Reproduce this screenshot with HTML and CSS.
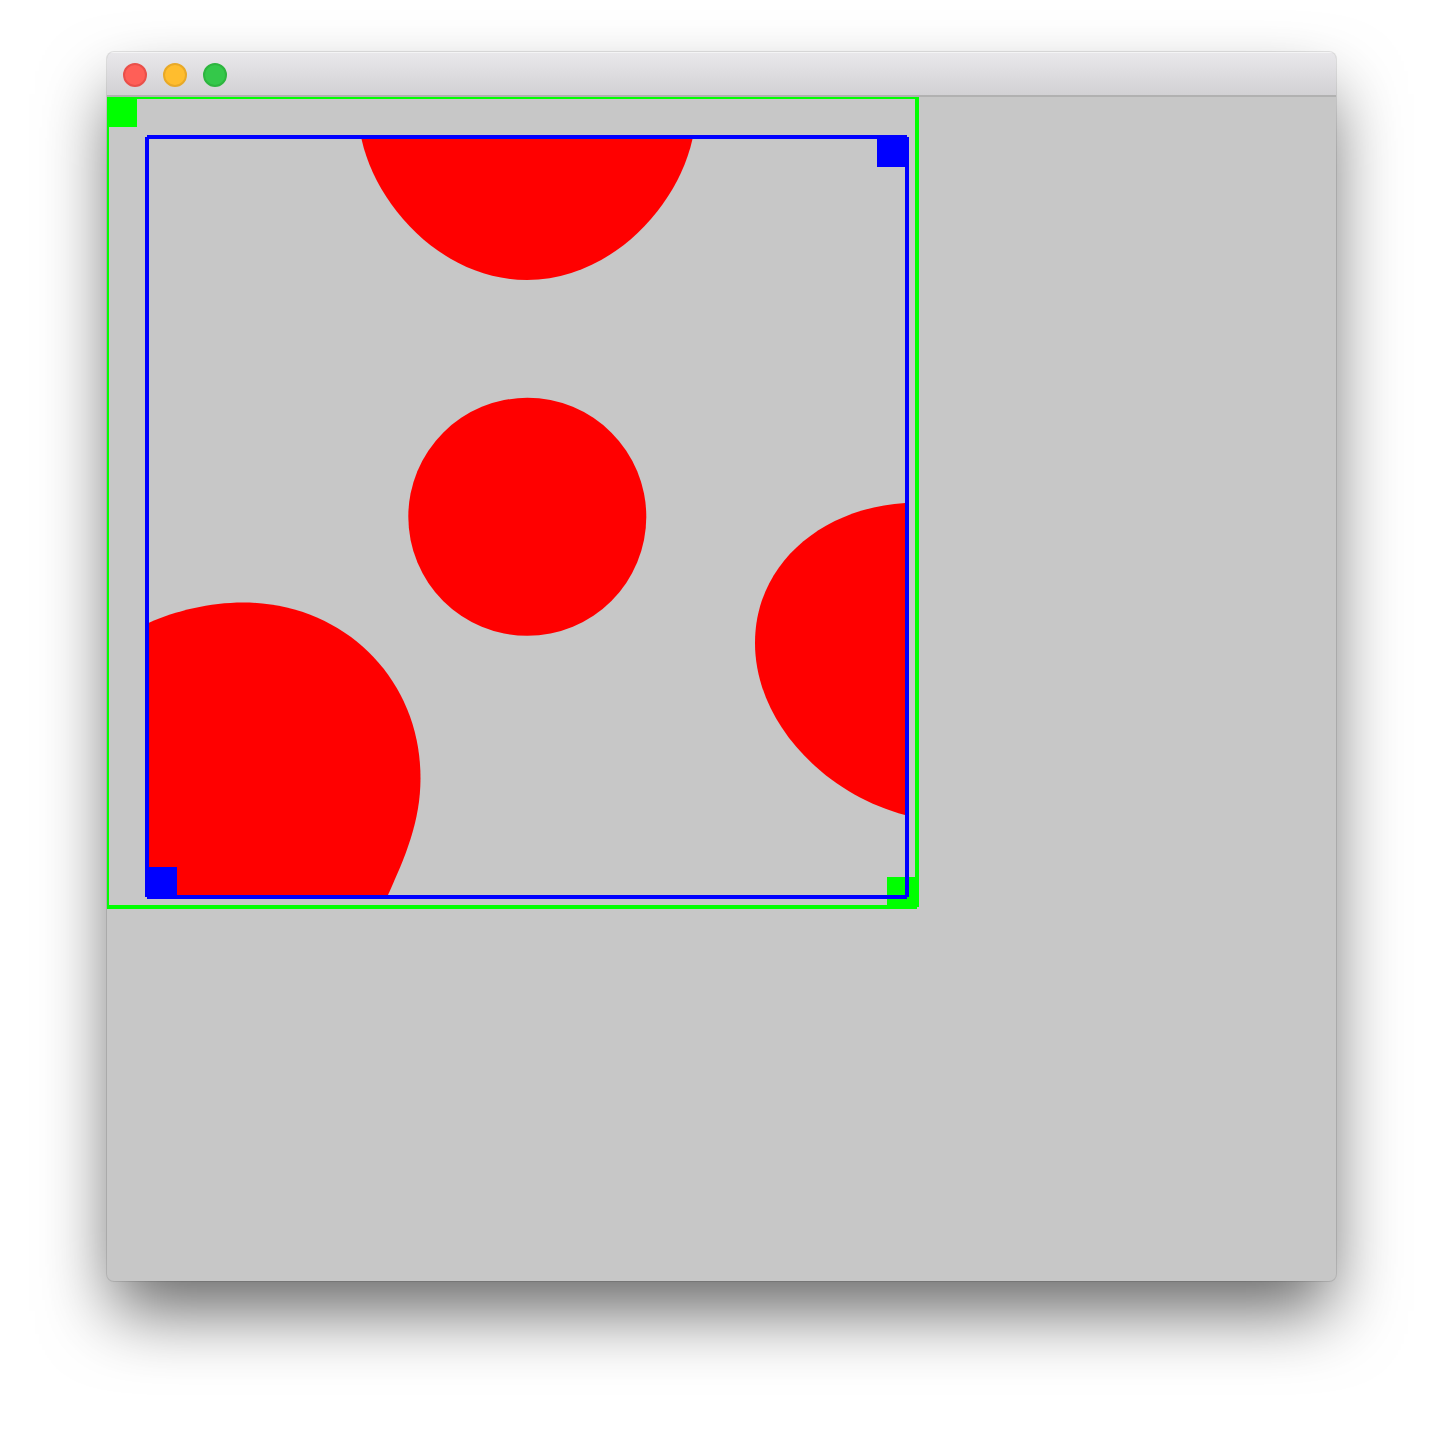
FILE: index.html
```html
<!DOCTYPE html>
<html lang="en">
<head>
    <meta charset="UTF-8">
    <title>Clip</title>
    <link rel="stylesheet" href="styles.css">
</head>
<body>
    <div class="window">
        <div class="titlebar">
            <span class="light red"></span>
            <span class="light yellow"></span>
            <span class="light green"></span>
        </div>
        <div class="content">
            <svg class="canvas" width="812" height="812" viewBox="0 0 812 812">
                <g class="green-box">
                    <rect x="0" y="0" width="30" height="30"/>
                    <rect x="780" y="780" width="30" height="30"/>
                    <path class="outline" d="M0 0H810 M810 0V810 M0 810H810 M0 0V810"/>
                </g>
                <g class="blobs">
                    <path d="M254.5 42 C270 112 338 183 420 183 C502 183 570 112 585.5 42 Z"/>
                    <circle cx="420.3" cy="419.8" r="119"/>
                    <path d="M798 406 C716 411 648 466 648 546 C648 626 718 697 798 718 Z"/>
                    <path d="M42 525.7 C68 514 103 505.5 136 505.5 C236 505.5 313.5 581 313.5 681 C313.5 725 298 760 281 798 L42 798 Z"/>
                </g>
                <g class="blue-box">
                    <rect x="770" y="40" width="30" height="30"/>
                    <rect x="40" y="770" width="30" height="30"/>
                    <path class="outline" d="M40 40H800 M800 40V800 M40 800H800 M40 40V800"/>
                </g>
            </svg>
        </div>
    </div>
</body>
</html>
```

FILE: styles.css
```css
body {
    margin: 0;
    height: 1429px;
    overflow: hidden;
    background-color: #fff;
}
.window {
    width: 1229px;
    height: 1229px;
    margin: 52px 0 0 107px;
    border-radius: 7px;
    overflow: hidden;
    background-color: #c7c7c7;
    box-shadow: 0 0 0 1px rgba(0, 0, 0, 0.1), 0 36px 70px -6px rgba(0, 0, 0, 0.6);
}
.titlebar {
    height: 41px;
    display: flex;
    align-items: center;
    gap: 16px;
    padding: 2px 0 0 16px;
    background: linear-gradient(#e9e8eb, #d2d1d4);
    box-shadow: inset 0 1px 0 #f4f4f5;
    border-bottom: 2px solid #b1b1b1;
}
.light {
    width: 24px;
    height: 24px;
    border-radius: 50%;
    box-sizing: border-box;
    border: 2px solid;
}
.red {
    background-color: #ff5f57;
    border-color: #e9504a;
}
.yellow {
    background-color: #ffbd2e;
    border-color: #e8a928;
}
.green {
    background-color: #34c84a;
    border-color: #2db53f;
}
.content {
    height: 1184px;
}
.canvas {
    display: block;
}
.blobs {
    fill: #f00;
}
.blue-box {
    fill: #00f;
}
.green-box {
    fill: #0f0;
}
.outline {
    fill: none;
    stroke-width: 4;
}
.blue-box .outline {
    stroke: #00f;
}
.green-box .outline {
    stroke: #0f0;
}
```
